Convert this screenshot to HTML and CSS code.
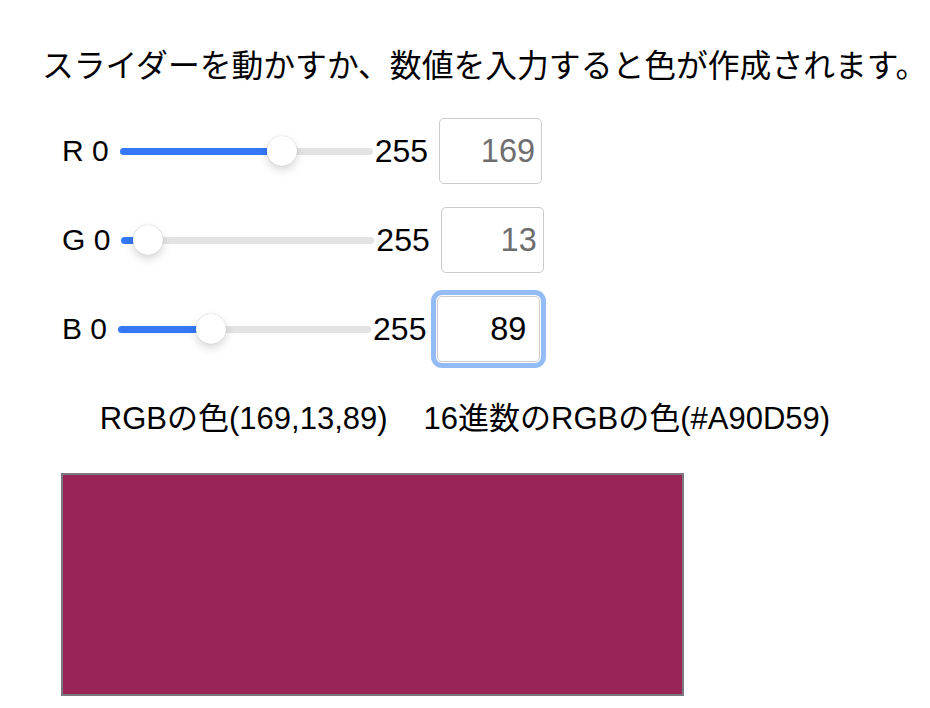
FILE: index.html
```html
<!DOCTYPE html>
<html lang="ja">
<head>
<meta charset="utf-8">
<title>RGB</title>
<link rel="stylesheet" href="styles.css">
</head>
<body>
<main class="app">
  <p class="lead">スライダーを動かすか、数値を入力すると色が作成されます。</p>
  <div class="rows">
    <div class="row">
      <span class="lbl">R 0</span>
      <input class="slider" type="range" min="0" max="255" value="169" style="--p: 147px">
      <span class="max">255</span>
      <input class="num" type="number" min="0" max="255" value="169">
    </div>
    <div class="row">
      <span class="lbl">G 0</span>
      <input class="slider" type="range" min="0" max="255" value="13" style="--p: 26px">
      <span class="max">255</span>
      <input class="num" type="number" min="0" max="255" value="13">
    </div>
    <div class="row">
      <span class="lbl">B 0</span>
      <input class="slider" type="range" min="0" max="255" value="89" style="--p: 92px">
      <span class="max">255</span>
      <input class="num active" type="number" min="0" max="255" value="89">
    </div>
  </div>
  <p class="info"><span>RGBの色(169,13,89)</span><span>16進数のRGBの色(#A90D59)</span></p>
  <div class="swatch"></div>
</main>
</body>
</html>
```
FILE: styles.css
```css
html, body {
  margin: 0;
  padding: 0;
  background: #fff;
}
.app {
  font-family: "Liberation Sans", "Noto Sans CJK JP", sans-serif;
  color: #000;
  padding: 48px 0 0 61px;
  width: 869px;
}
.lead {
  margin: 0 0 0 -19px;
  font-size: 31.8px;
  line-height: 37px;
  white-space: nowrap;
}
.rows {
  display: flex;
  flex-direction: column;
  gap: 23px;
  margin-top: 33px;
}
.row {
  display: flex;
  align-items: center;
  padding-left: 1px;
  height: 66px;
  font-size: 30px;
}
.lbl {
  white-space: nowrap;
}
.slider {
  -webkit-appearance: none;
  appearance: none;
  width: 253px;
  height: 32px;
  margin: 0 2px 0 11px;
  padding: 0;
  background: transparent;
}
.slider::-webkit-slider-runnable-track {
  height: 7px;
  border-radius: 4px;
  background: linear-gradient(to right, #3478f6 var(--p), #e3e3e3 var(--p));
}
.slider::-webkit-slider-thumb {
  -webkit-appearance: none;
  appearance: none;
  width: 30px;
  height: 30px;
  margin-top: -11.5px;
  border-radius: 50%;
  background: #fff;
  box-shadow: 0 0 1px rgba(0,0,0,0.25), 0 4px 10px rgba(0,0,0,0.16);
}
.max {
  white-space: nowrap;
  font-size: 32px;
}
.num {
  box-sizing: border-box;
  width: 103px;
  height: 66px;
  margin-left: 11px;
  padding: 0 6px 0 0;
  border: 1.5px solid #cbcbcb;
  border-radius: 5px;
  font-family: "Liberation Sans", sans-serif;
  font-size: 32.5px;
  color: #6e6e6e;
  text-align: right;
  background: #fff;
  -moz-appearance: textfield;
}
.num::-webkit-inner-spin-button,
.num::-webkit-outer-spin-button {
  -webkit-appearance: none;
  margin: 0;
}
.num.active {
  color: #000;
  padding-right: 13px;
  outline: 5px solid #93bcf6;
  outline-offset: 1px;
}
.info {
  margin: 40px 0 0 -61px;
  width: 930px;
  display: flex;
  justify-content: center;
  gap: 36px;
  font-size: 31px;
  line-height: 34px;
}
.swatch {
  margin-top: 37px;
  width: 623px;
  height: 223px;
  box-sizing: border-box;
  border: 2px solid #7d7880;
  background: #992456;
}
```
